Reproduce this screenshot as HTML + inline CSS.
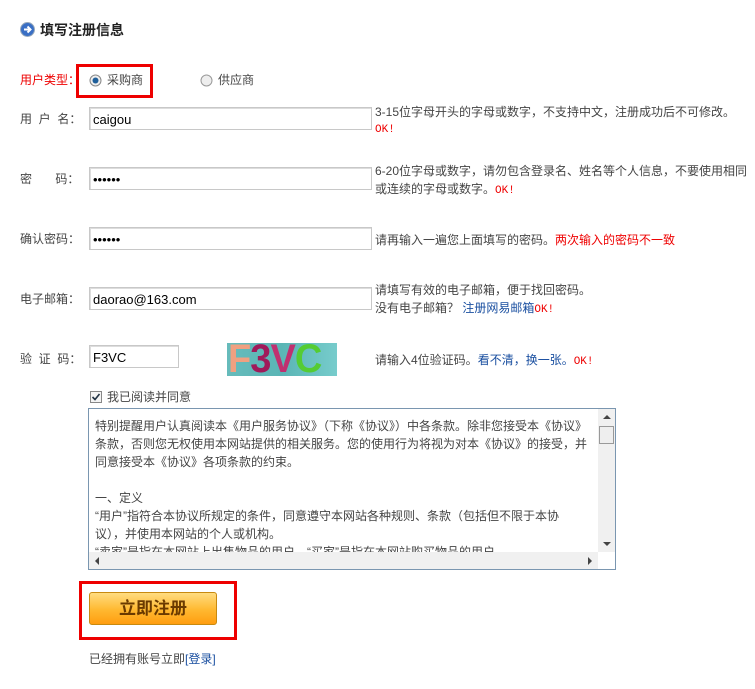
<!DOCTYPE html>
<html><head><meta charset="utf-8"><style>
body{margin:0;width:755px;height:689px;background:#fff;position:relative;overflow:hidden;font:12px "Liberation Sans","Noto Sans CJK SC",sans-serif;color:#444}
.a{position:absolute;white-space:nowrap;line-height:16px}
.in{position:absolute;border:1px solid #c8c8c8;box-shadow:inset 1px 1px 0 #ddd;height:23px;font:13px "Liberation Sans",sans-serif;color:#000;line-height:23px;padding-left:3px;box-sizing:border-box}
.red{color:#e00}.blue{color:#1a4fa0}
.ok{color:#e00;font-family:"Liberation Mono",monospace;font-size:11px}
</style></head><body>
<svg class="a" style="left:20px;top:22px" width="15" height="15"><circle cx="7.5" cy="7.5" r="7" fill="#3a6fc4" stroke="#9ab" /><path d="M4 7.5h6M7.5 4.5l3 3-3 3" stroke="#fff" stroke-width="2" fill="none"/></svg>
<div class="a" style="left:40px;top:22px;font-size:14px;font-weight:bold;color:#222">填写注册信息</div>

<div class="a red" style="left:20px;top:72px">用户类型：</div>
<div style="position:absolute;left:76px;top:64px;width:71px;height:28px;border:3px solid #e00"></div>
<svg class="a" style="left:89px;top:74px" width="13" height="13"><circle cx="6.5" cy="6.5" r="5.5" fill="#eee" stroke="#888"/><circle cx="6.5" cy="6.5" r="3" fill="#1f5f9a"/></svg>
<div class="a" style="left:107px;top:72px">采购商</div>
<svg class="a" style="left:200px;top:74px" width="13" height="13"><circle cx="6.5" cy="6.5" r="5.5" fill="#eee" stroke="#999"/></svg>
<div class="a" style="left:218px;top:72px">供应商</div>

<div class="a" style="left:20px;top:111px">用&nbsp;&nbsp;户&nbsp;&nbsp;名：</div>
<div class="in" style="left:89px;top:107px;width:283px">caigou</div>
<div class="a" style="left:375px;top:104px">3-15位字母开头的字母或数字，不支持中文，注册成功后不可修改。</div>
<div class="a ok" style="left:375px;top:122px">OK!</div>

<div class="a" style="left:20px;top:171px">密&nbsp;&nbsp;&nbsp;&nbsp;&nbsp;&nbsp;&nbsp;码：</div>
<div class="in" style="left:89px;top:167px;width:283px">••••••</div>
<div class="a" style="left:375px;top:163px">6-20位字母或数字，请勿包含登录名、姓名等个人信息，不要使用相同</div>
<div class="a" style="left:375px;top:181px">或连续的字母或数字。<span class="ok">OK!</span></div>

<div class="a" style="left:20px;top:231px">确认密码：</div>
<div class="in" style="left:89px;top:227px;width:283px">••••••</div>
<div class="a" style="left:375px;top:232px">请再输入一遍您上面填写的密码。<span class="red">两次输入的密码不一致</span></div>

<div class="a" style="left:20px;top:291px">电子邮箱：</div>
<div class="in" style="left:89px;top:287px;width:283px">daorao@163.com</div>
<div class="a" style="left:375px;top:282px">请填写有效的电子邮箱，便于找回密码。</div>
<div class="a" style="left:375px;top:300px">没有电子邮箱？ <span class="blue">注册网易邮箱</span><span class="ok">OK!</span></div>

<div class="a" style="left:20px;top:351px">验&nbsp;&nbsp;证&nbsp;&nbsp;码：</div>
<div class="in" style="left:89px;top:345px;width:90px">F3VC</div>
<div class="a" style="left:227px;top:343px;width:110px;height:33px;background:linear-gradient(90deg,#6bb,#5ab5b5,#7cc);overflow:hidden">
<span style="position:absolute;left:1px;top:-6px;font:bold 40px 'Liberation Sans';color:#f0a080;letter-spacing:-1px;transform:scaleX(0.95);transform-origin:left">F<span style="color:#a01a5a">3</span><span style="color:#c03070">V</span><span style="color:#5c3">C</span></span></div>
<div class="a" style="left:375px;top:352px">请输入4位验证码。<span class="blue">看不清，换一张。</span><span class="ok">OK!</span></div>

<svg class="a" style="left:90px;top:391px" width="12" height="12"><rect x=".5" y=".5" width="11" height="11" fill="#f4f4f4" stroke="#888"/><path d="M2.5 6l2.5 2.5 4.5-5.5" stroke="#234" stroke-width="1.6" fill="none"/></svg>
<div class="a" style="left:107px;top:389px">我已阅读并同意</div>

<div style="position:absolute;left:88px;top:408px;width:526px;height:160px;border:1px solid #7a96b0;overflow:hidden">
<div style="position:absolute;left:6px;top:8px;width:500px;line-height:18px;color:#444;white-space:nowrap">
特别提醒用户认真阅读本《用户服务协议》（下称《协议》）中各条款。除非您接受本《协议》<br>条款，否则您无权使用本网站提供的相关服务。您的使用行为将视为对本《协议》的接受，并<br>同意接受本《协议》各项条款的约束。<br><br>一、定义<br>“用户”指符合本协议所规定的条件，同意遵守本网站各种规则、条款（包括但不限于本协<br>议），并使用本网站的个人或机构。<br>“卖家”是指在本网站上出售物品的用户。“买家”是指在本网站购买物品的用户。</div>
<div style="position:absolute;right:0;top:0;width:17px;height:143px;background:#f0f0f0"><div style="position:absolute;left:1px;top:17px;width:13px;height:16px;border:1px solid #999;background:#eee"></div><div style="position:absolute;left:5px;top:6px;border:4px solid transparent;border-bottom-color:#444;border-top:0"></div><div style="position:absolute;left:5px;bottom:6px;border:4px solid transparent;border-top-color:#444;border-bottom:0"></div></div>
<div style="position:absolute;left:0;bottom:0;width:509px;height:17px;background:#f0f0f0"><div style="position:absolute;left:6px;top:5px;border:4px solid transparent;border-right-color:#444;border-left:0"></div><div style="position:absolute;right:6px;top:5px;border:4px solid transparent;border-left-color:#444;border-right:0"></div></div>
</div>

<div style="position:absolute;left:79px;top:581px;width:152px;height:53px;border:3px solid #e00"></div>
<div style="position:absolute;left:89px;top:592px;width:128px;height:33px;border:1px solid #c88a10;border-radius:3px;background:linear-gradient(#ffdc80,#ffb830 55%,#ff9d10);box-sizing:border-box;text-align:center;line-height:31px;font-size:17px;font-weight:bold;color:#6a3a00">立即注册</div>

<div class="a" style="left:89px;top:651px">已经拥有账号立即<span class="blue">[登录]</span></div>
</body></html>
